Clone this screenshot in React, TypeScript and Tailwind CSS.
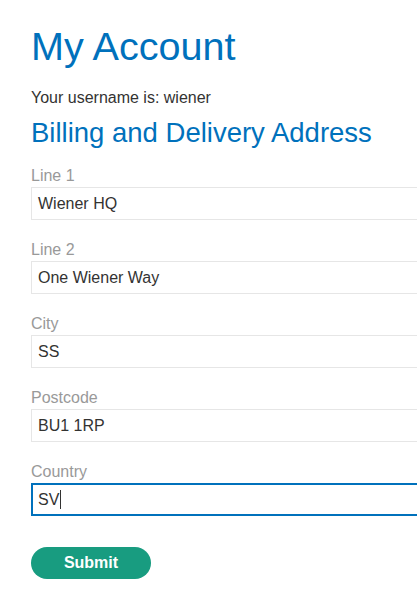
import React from "react";

const fields = [
  { label: "Line 1", value: "Wiener HQ" },
  { label: "Line 2", value: "One Wiener Way" },
  { label: "City", value: "SS" },
  { label: "Postcode", value: "BU1 1RP" },
  { label: "Country", value: "SV", focused: true },
];

export default function App() {
  return (
    <div className="min-h-[589px] w-[417px] overflow-hidden bg-white pl-[31px] font-['Liberation_Sans',Arial,sans-serif] text-[#333332]">
      {/* Heading */}
      <h1 className="pt-[23px] text-[39.6px] leading-[46px] text-[#0071bc]">
        My Account
      </h1>

      <p className="mt-[19px] text-[16px] leading-[20px]">
        Your username is: wiener
      </p>

      <h2 className="mt-[9px] text-[27.5px] leading-[32px] text-[#0071bc]">
        Billing and Delivery Address
      </h2>

      {/* Address form */}
      <form className="mt-[17px]">
        {fields.map((f) => (
          <div key={f.label} className="mb-[20px]">
            <label className="block text-[16px] leading-[20px] text-[#999999]">
              {f.label}
            </label>
            <div
              className={`mt-[1px] flex h-[33px] w-[520px] items-center bg-white text-[16px] text-[#333332] ${
                f.focused
                  ? "border-2 border-[#0071bc] pl-[5px]"
                  : "border border-[#e6e6e6] pl-[6px]"
              }`}
            >
              <span>{f.value}</span>
              {f.focused && (
                <span className="ml-[1px] inline-block h-[19px] w-px bg-[#333332]" />
              )}
            </div>
          </div>
        ))}

        <button
          type="button"
          className="mt-[11px] h-[32px] w-[120px] rounded-full bg-[#189c80] text-[16px] font-bold text-white"
        >
          Submit
        </button>
      </form>
    </div>
  );
}
